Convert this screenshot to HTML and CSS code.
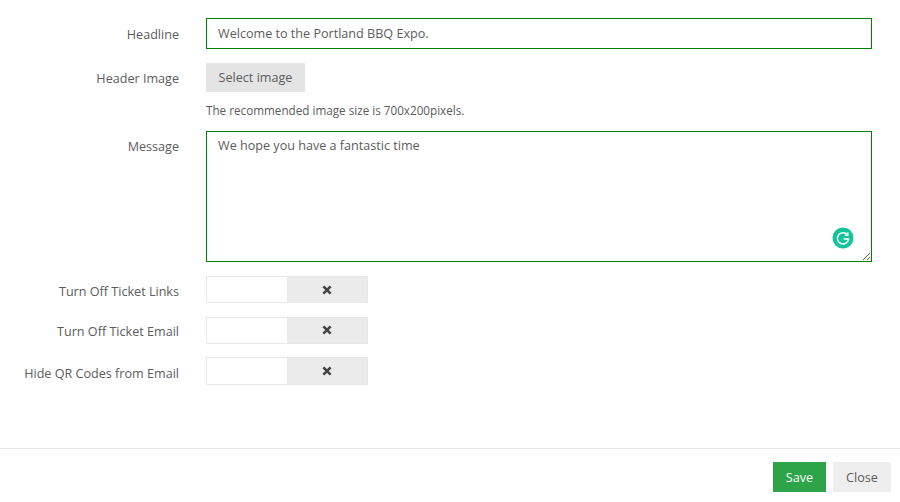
FILE: index.html
```html
<!DOCTYPE html>
<html lang="en">
<head>
  <meta charset="UTF-8" />
  <title>Settings</title>
  <link rel="stylesheet" href="styles.css">
</head>
<body>
  <div class="form-body">
    <div class="form-row headline-row">
      <label class="form-label">Headline</label>
      <input class="text-input" type="text" value="Welcome to the Portland BBQ Expo." />
    </div>

    <div class="form-row image-row">
      <label class="form-label">Header Image</label>
      <div>
        <button class="select-btn">Select image</button>
        <p class="help-text">The recommended image size is 700x200pixels.</p>
      </div>
    </div>

    <div class="form-row message-row">
      <label class="form-label">Message</label>
      <div class="textarea-wrap">
        <textarea class="text-area">We hope you have a fantastic time</textarea>
        <span class="grammarly-badge">
          <svg width="22" height="22" viewBox="0 0 22 22">
            <circle cx="11" cy="11" r="10.5" fill="#15c39a"/>
            <path d="M15.4 7.8A5.6 5.6 0 1 0 16.6 12H11.6" fill="none" stroke="#fff" stroke-width="1.4"/>
            <path d="M15.9 5.2V8.4H12.7" fill="none" stroke="#fff" stroke-width="1.2"/>
          </svg>
        </span>
      </div>
    </div>

    <div class="form-row switch-row">
      <label class="form-label">Turn Off Ticket Links</label>
      <div class="switch"><span class="switch-blank"></span><span class="switch-off"><svg width="10" height="10" viewBox="0 0 10 10"><path d="M1.4 1.4L8.6 8.6M8.6 1.4L1.4 8.6" stroke="#444" stroke-width="2.6"/></svg></span></div>
    </div>
    <div class="form-row switch-row">
      <label class="form-label label-up">Turn Off Ticket Email</label>
      <div class="switch"><span class="switch-blank"></span><span class="switch-off"><svg width="10" height="10" viewBox="0 0 10 10"><path d="M1.4 1.4L8.6 8.6M8.6 1.4L1.4 8.6" stroke="#444" stroke-width="2.6"/></svg></span></div>
    </div>
    <div class="form-row switch-row">
      <label class="form-label label-down">Hide QR Codes from Email</label>
      <div class="switch switch-tall"><span class="switch-blank"></span><span class="switch-off"><svg width="10" height="10" viewBox="0 0 10 10"><path d="M1.4 1.4L8.6 8.6M8.6 1.4L1.4 8.6" stroke="#444" stroke-width="2.6"/></svg></span></div>
    </div>
  </div>

  <div class="form-footer">
    <button class="btn btn-save">Save</button>
    <button class="btn btn-close">Close</button>
  </div>
</body>
</html>
```

FILE: styles.css
```css
body {
  margin: 0;
  background: #fff;
  font-family: 'Open Sans', sans-serif;
  font-size: 12.6px;
  color: #5c5c5c;
}

.form-body {
  height: 448px;
  box-sizing: border-box;
  padding: 18px 28px 0 0;
}

.form-row {
  display: grid;
  grid-template-columns: 179px 1fr;
  column-gap: 27px;
}

.form-label {
  text-align: right;
  line-height: 17px;
  padding-top: 8px;
}

.headline-row {
  margin-bottom: 14px;
}

.text-input,
.text-area {
  width: 100%;
  box-sizing: border-box;
  border: 1px solid #008000;
  border-radius: 0;
  outline: none;
  background: #fff;
  font-family: 'Open Sans', sans-serif;
  font-size: 12.6px;
  color: #5c5c5c;
  padding: 6px 11px;
}

.text-input {
  height: 31px;
  display: block;
}

.select-btn {
  display: block;
  width: 99px;
  height: 29px;
  border: none;
  background: #e4e4e4;
  font-family: 'Open Sans', sans-serif;
  font-size: 12.6px;
  color: #5c5c5c;
  padding: 0;
}

.help-text {
  margin: 10px 0 13px;
  font-size: 11.7px;
  line-height: 16px;
}

.image-row .form-label {
  padding-top: 7px;
}

.message-row {
  margin-bottom: 14px;
}

.message-row .form-label {
  padding-top: 7px;
}

.textarea-wrap {
  position: relative;
}

.text-area {
  display: block;
  height: 131px;
  line-height: 17px;
  padding: 5px 11px;
  resize: vertical;
}

.grammarly-badge {
  position: absolute;
  right: 18px;
  bottom: 13px;
  width: 22px;
  height: 22px;
}

.switch-row {
  margin-bottom: 13.5px;
}

.switch-row .form-label {
  padding-top: 7px;
}

.switch-row .label-up {
  padding-top: 6px;
}

.switch-row .label-down {
  padding-top: 8px;
}

.switch {
  display: flex;
  width: 162px;
  height: 27px;
  box-sizing: border-box;
  border: 1px solid #e8e8e8;
  background: #fff;
}

.switch-tall {
  height: 28px;
}

.switch-blank {
  width: 80px;
}

.switch-off {
  flex: 1;
  display: flex;
  align-items: center;
  justify-content: center;
  background: #ebebeb;
}

.form-footer {
  display: flex;
  justify-content: flex-end;
  gap: 7px;
  border-top: 1px solid #e5e5e5;
  padding: 13px 9px 0 0;
}

.btn {
  height: 30px;
  border: none;
  font-family: 'Open Sans', sans-serif;
  font-size: 12.6px;
  padding: 0;
}

.btn-save {
  width: 53px;
  background: #2da44a;
  color: #fff;
  font-weight: 500;
}

.btn-close {
  width: 58px;
  background: #eeeeee;
  color: #5c5c5c;
}
```
